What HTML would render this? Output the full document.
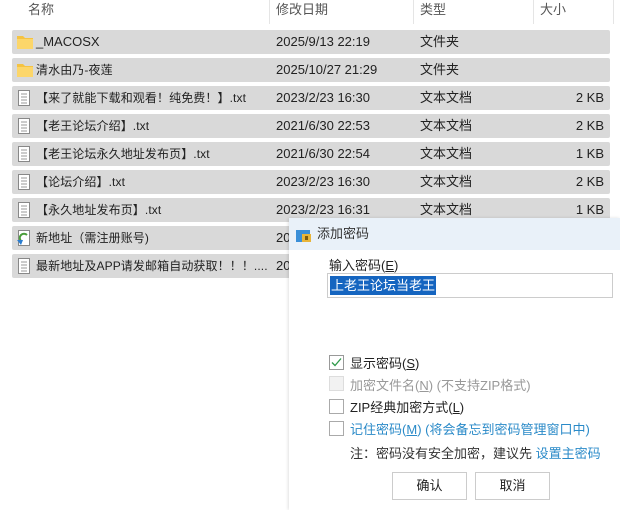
<!DOCTYPE html>
<html><head><meta charset="utf-8"><style>
*{margin:0;padding:0;box-sizing:border-box}
body{width:620px;height:510px;background:#fff;font-family:"Liberation Sans","Noto Sans CJK SC",sans-serif;font-size:13px;color:#222;position:relative;overflow:hidden}
.h{position:absolute;top:0;height:22px;color:#555;line-height:20px}
.sep{position:absolute;top:0;width:1px;height:24px;background:#e5e5e5}
.row{position:absolute;left:12px;width:598px;height:24px;background:#d9d9d9;border-radius:2px;line-height:24px}
.row span{position:absolute;white-space:nowrap}
.row span.n{font-size:12px;letter-spacing:0.1px}
.ic{position:absolute;left:4px;top:4px}
.dlg{position:absolute;left:289px;top:218px;width:331px;height:292px;background:#fff;box-shadow:-1px 0 3px rgba(0,0,0,.12)}
.tb{height:32px;background:#e9f1f9;line-height:32px;padding-left:28px;color:#333}
.cb{position:absolute;left:40px;width:15px;height:15px;border:1px solid #aaa;background:#fff}
.lbl{position:absolute;left:61px;white-space:nowrap}
.btn{position:absolute;top:254px;width:75px;height:28px;border:1px solid #ccc;background:#fff;text-align:center;line-height:26px}
u{text-decoration:underline}
</style></head><body>
<div class="h" style="left:28px">名称</div><div class="sep" style="left:269px"></div>
<div class="h" style="left:276px">修改日期</div><div class="sep" style="left:413px"></div>
<div class="h" style="left:420px">类型</div><div class="sep" style="left:533px"></div>
<div class="h" style="left:540px">大小</div><div class="sep" style="left:613px"></div>

<div class="row" style="top:30px"><svg class="ic" width="18" height="16"><path d="M1 2h6l2 2h8v11H1z" fill="#f5c342"/><rect x="1" y="5" width="16" height="10" fill="#fcd66a"/></svg><span style="left:24px">_MACOSX</span><span style="left:264px">2025/9/13 22:19</span><span style="left:408px">文件夹</span></div>
<div class="row" style="top:58px"><svg class="ic" width="18" height="16"><path d="M1 2h6l2 2h8v11H1z" fill="#f5c342"/><rect x="1" y="5" width="16" height="10" fill="#fcd66a"/></svg><span class="n" style="left:24px">清水由乃-夜莲</span><span style="left:264px">2025/10/27 21:29</span><span style="left:408px">文件夹</span></div>

<div class="row" style="top:86px"><svg class="ic" width="16" height="17"><rect x="2.5" y="0.5" width="11" height="15" fill="#fff" stroke="#888"/><path d="M5 4h6M5 7h6M5 10h6M5 13h6" stroke="#999"/></svg><span class="n" style="left:24px">【来了就能下载和观看！纯免费！】.txt</span><span style="left:264px">2023/2/23 16:30</span><span style="left:408px">文本文档</span><span style="right:6px">2 KB</span></div>
<div class="row" style="top:114px"><svg class="ic" width="16" height="17"><rect x="2.5" y="0.5" width="11" height="15" fill="#fff" stroke="#888"/><path d="M5 4h6M5 7h6M5 10h6M5 13h6" stroke="#999"/></svg><span class="n" style="left:24px">【老王论坛介绍】.txt</span><span style="left:264px">2021/6/30 22:53</span><span style="left:408px">文本文档</span><span style="right:6px">2 KB</span></div>
<div class="row" style="top:142px"><svg class="ic" width="16" height="17"><rect x="2.5" y="0.5" width="11" height="15" fill="#fff" stroke="#888"/><path d="M5 4h6M5 7h6M5 10h6M5 13h6" stroke="#999"/></svg><span class="n" style="left:24px">【老王论坛永久地址发布页】.txt</span><span style="left:264px">2021/6/30 22:54</span><span style="left:408px">文本文档</span><span style="right:6px">1 KB</span></div>
<div class="row" style="top:170px"><svg class="ic" width="16" height="17"><rect x="2.5" y="0.5" width="11" height="15" fill="#fff" stroke="#888"/><path d="M5 4h6M5 7h6M5 10h6M5 13h6" stroke="#999"/></svg><span class="n" style="left:24px">【论坛介绍】.txt</span><span style="left:264px">2023/2/23 16:30</span><span style="left:408px">文本文档</span><span style="right:6px">2 KB</span></div>
<div class="row" style="top:198px"><svg class="ic" width="16" height="17"><rect x="2.5" y="0.5" width="11" height="15" fill="#fff" stroke="#888"/><path d="M5 4h6M5 7h6M5 10h6M5 13h6" stroke="#999"/></svg><span class="n" style="left:24px">【永久地址发布页】.txt</span><span style="left:264px">2023/2/23 16:31</span><span style="left:408px">文本文档</span><span style="right:6px">1 KB</span></div>
<div class="row" style="top:226px"><svg class="ic" width="16" height="17"><rect x="2.5" y="0.5" width="11" height="15" fill="#fff" stroke="#888"/><path d="M5 11a4 4 0 0 1 6-6" stroke="#4a9e3a" stroke-width="2" fill="none"/><path d="M1 10l4 5 2-5z" fill="#2a7dd0"/></svg><span class="n" style="left:24px">新地址（需注册账号)</span><span style="left:264px">20</span></div>
<div class="row" style="top:254px"><svg class="ic" width="16" height="17"><rect x="2.5" y="0.5" width="11" height="15" fill="#fff" stroke="#888"/><path d="M5 4h6M5 7h6M5 10h6M5 13h6" stroke="#999"/></svg><span class="n" style="left:24px">最新地址及APP请发邮箱自动获取！！！....</span><span style="left:264px">20</span></div>

<div class="dlg">
<div class="tb">添加密码</div>
<svg style="position:absolute;left:7px;top:9px" width="16" height="16"><rect x="0" y="3" width="14" height="12" fill="#3a8fd8"/><rect x="6" y="7" width="9" height="8" fill="#e8b53a"/><rect x="9" y="9" width="3" height="4" fill="#7a5a10"/></svg>
<div style="position:absolute;left:40px;top:37px">输入密码(<u>E</u>)</div>
<div style="position:absolute;left:38px;top:55px;width:286px;height:25px;border:1px solid #ccc"><span style="position:absolute;left:2px;top:2px;background:#1565c0;color:#fff;line-height:19px;padding:0 1px">上老王论坛当老王</span></div>
<div class="cb" style="top:137px;border-color:#999"><svg width="13" height="13" style="position:absolute;left:0;top:0"><path d="M2 6.5l3 3 6-7" stroke="#2e9a4a" stroke-width="1.3" fill="none"/></svg></div><div class="lbl" style="top:135px">显示密码(<u>S</u>)</div>
<div class="cb" style="top:158px;border-color:#ddd;background:#f2f2f2"></div><div class="lbl" style="top:157px;color:#999">加密文件名(<u>N</u>) (不支持ZIP格式)</div>
<div class="cb" style="top:181px"></div><div class="lbl" style="top:179px">ZIP经典加密方式(<u>L</u>)</div>
<div class="cb" style="top:203px"></div><div class="lbl" style="top:201px;color:#2a8ac8">记住密码(<u>M</u>) (将会备忘到密码管理窗口中)</div>
<div class="lbl" style="top:225px;color:#333">注：密码没有安全加密，建议先 <span style="color:#2a8ac8">设置主密码</span></div>
<div class="btn" style="left:103px">确认</div>
<div class="btn" style="left:186px">取消</div>
</div>
</body></html>
